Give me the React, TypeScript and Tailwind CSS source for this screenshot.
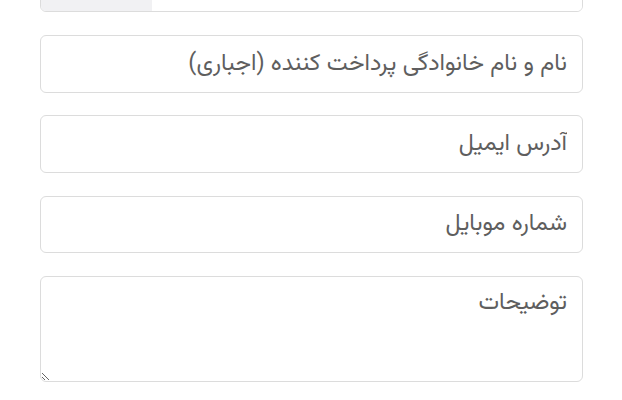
import React from "react";

const font = { fontFamily: '"Vazirmatn","Noto Sans Arabic","Noto Naskh Arabic","DejaVu Sans",sans-serif' };

export default function App() {
  return (
    <div dir="rtl" className="w-[622px] h-[400px] overflow-hidden bg-white" style={font}>
      <div className="pl-[40px] pr-[39px] flex flex-col">
        <div className="-mt-[46px] h-[58px] flex flex-row-reverse border border-[#dcdcdc] rounded-md overflow-hidden">
          <div className="w-[111px] bg-[#f1f1f3]" />
          <div className="flex-1 bg-white" />
        </div>
        <input
          className="mt-[23px] h-[58px] w-full border border-[#dcdcdc] rounded-md px-[15px] text-[23.5px] placeholder:text-[#5e5e5e] outline-none"
          placeholder="نام و نام خانوادگی پرداخت کننده (اجباری)"
        />
        <input
          className="mt-[22px] h-[58px] w-full border border-[#dcdcdc] rounded-md px-[15px] text-[23.5px] placeholder:text-[#5e5e5e] outline-none"
          placeholder="آدرس ایمیل"
        />
        <input
          className="mt-[23px] h-[57px] w-full border border-[#dcdcdc] rounded-md px-[15px] text-[23.5px] placeholder:text-[#5e5e5e] outline-none"
          placeholder="شماره موبایل"
        />
        <textarea
          className="mt-[23px] h-[106px] w-full border border-[#dcdcdc] rounded-md px-[15px] pt-[9px] text-[23.5px] placeholder:text-[#5e5e5e] outline-none"
          placeholder="توضیحات"
        />
      </div>
    </div>
  );
}
